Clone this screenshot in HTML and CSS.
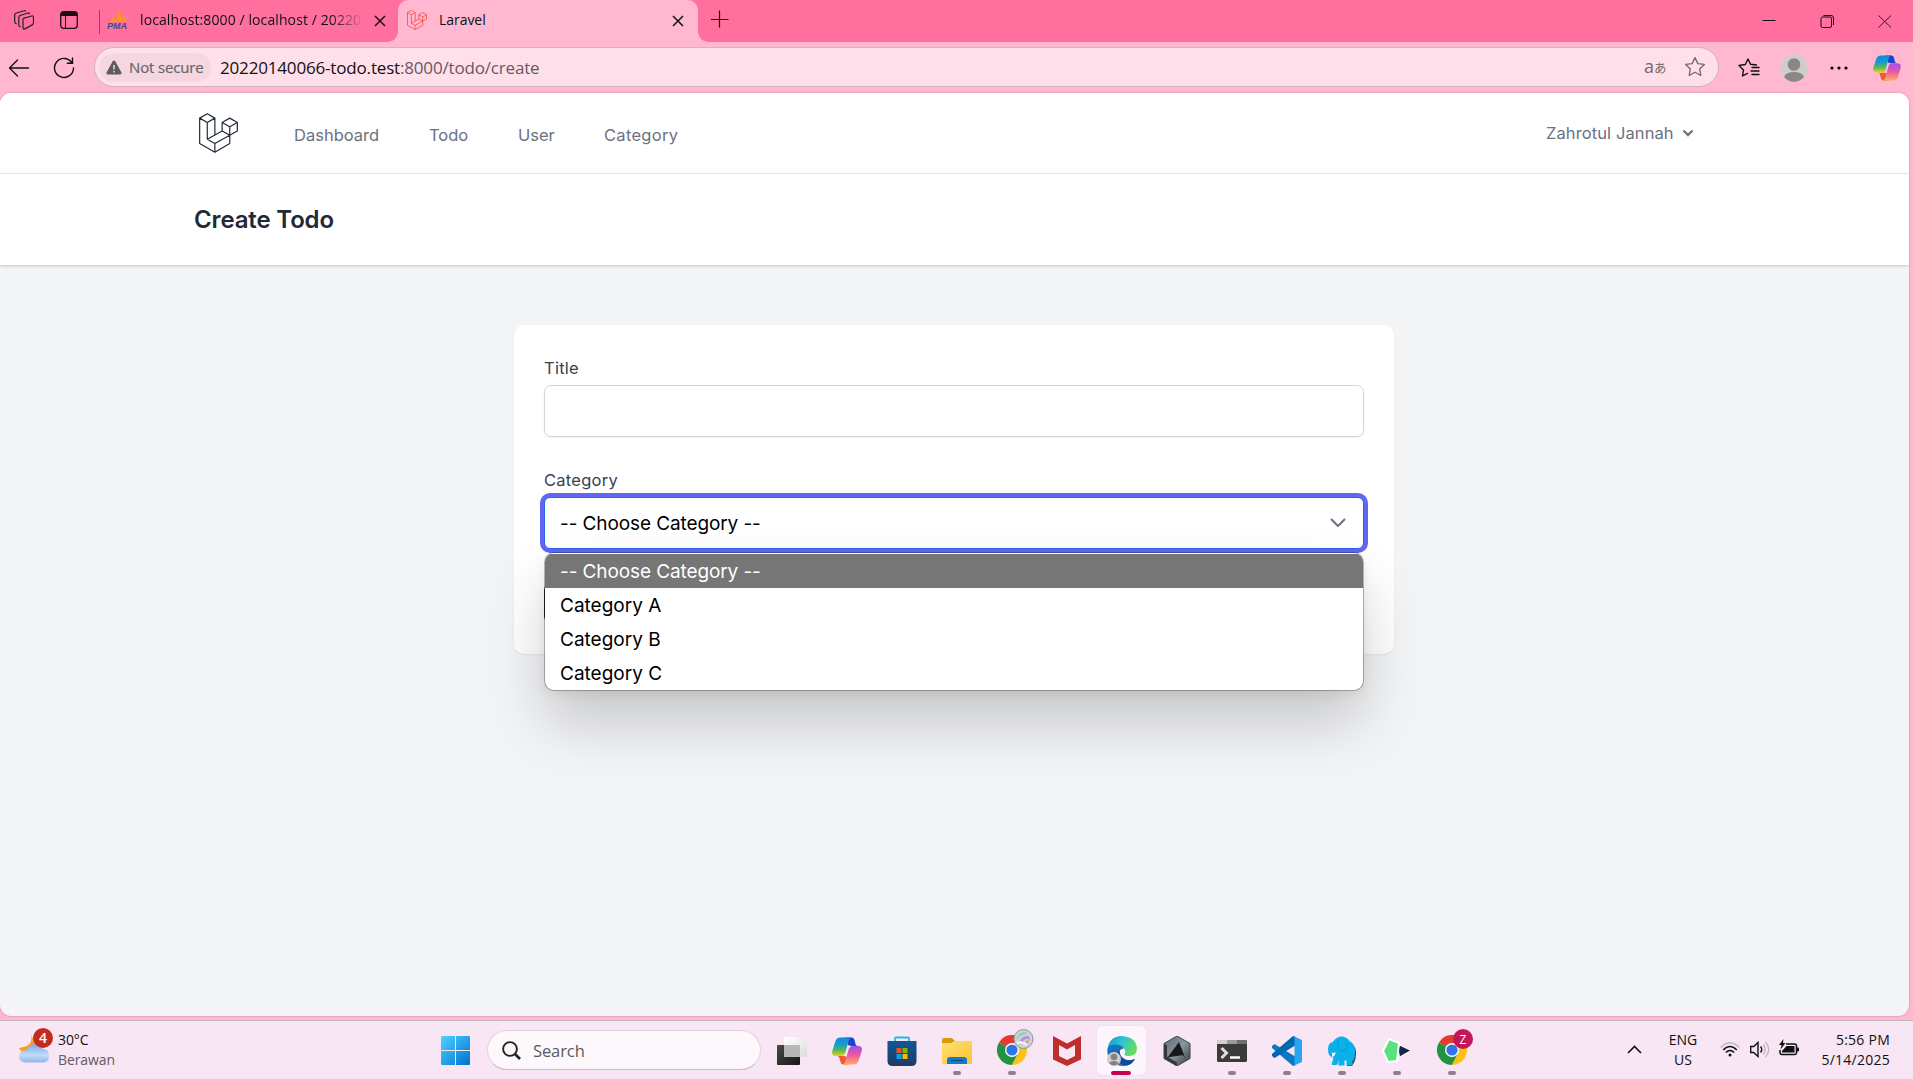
FILE: index.html
```html
<!DOCTYPE html>
<html lang="en">
<head>
<meta charset="utf-8">
<title>Laravel</title>
<link rel="stylesheet" href="styles.css">
</head>
<body>
<svg class="defs" aria-hidden="true">
  <defs>
    <linearGradient id="cpA" x1="0" y1="0" x2="0" y2="1"><stop offset="0" stop-color="#1685e0"/><stop offset=".4" stop-color="#159fc9"/><stop offset=".7" stop-color="#58b957"/><stop offset="1" stop-color="#f4cf1a"/></linearGradient>
    <linearGradient id="cpB" x1="0" y1="0" x2="0" y2="1"><stop offset="0" stop-color="#a04ff0"/><stop offset=".5" stop-color="#ec5a9b"/><stop offset="1" stop-color="#ffab68"/></linearGradient>
    <linearGradient id="win" x1="0" y1="0" x2="1" y2="1"><stop offset="0" stop-color="#4fd4ff"/><stop offset="1" stop-color="#006fd1"/></linearGradient>
    <linearGradient id="folder" x1="0" y1="0" x2="1" y2="1"><stop offset="0" stop-color="#ffe07c"/><stop offset="1" stop-color="#fdc22d"/></linearGradient>
    <linearGradient id="store" x1="0" y1="0" x2="0" y2="1"><stop offset="0" stop-color="#0f5799"/><stop offset="1" stop-color="#203a63"/></linearGradient>
    <linearGradient id="edgeTop" x1="0" y1="0" x2="1" y2=".4"><stop offset="0" stop-color="#1697dc"/><stop offset=".5" stop-color="#2cc0d4"/><stop offset="1" stop-color="#62de63"/></linearGradient>
    <linearGradient id="cloud" x1="0" y1="0" x2="0" y2="1"><stop offset="0" stop-color="#79a9ee"/><stop offset=".6" stop-color="#c6daf5"/><stop offset="1" stop-color="#8fb5ee"/></linearGradient>
    <linearGradient id="dark" x1="0" y1="0" x2="1" y2="1"><stop offset="0" stop-color="#4a4a48"/><stop offset="1" stop-color="#151515"/></linearGradient>
    <linearGradient id="pale" x1="0" y1="0" x2="1" y2="1"><stop offset="0" stop-color="#fff"/><stop offset="1" stop-color="#dcdcdc"/></linearGradient>
    <linearGradient id="hex" x1="0" y1="0" x2="1" y2="1"><stop offset="0" stop-color="#5c6670"/><stop offset=".5" stop-color="#8a97a2"/><stop offset="1" stop-color="#33393f"/></linearGradient>
    <symbol id="laravel" viewBox="56 70 118 120">
      <path d="M58 85 81 72l23 13-23 13zM58 85v77l46 26 45-26v-25M81 98v51M104 85v52M81 149l23 13v26M104 162l45-25-23-13-45 25M126 98l23-13 23 13-23 13zM126 98v26M149 111v26l23-13V98" fill="none" stroke="currentColor" stroke-linejoin="round"/>
    </symbol>
    <symbol id="copilot" viewBox="0 0 30 28">
      <path d="M13 .5h7q1.800 0 2.500 2.500l1.200 4.500q.6 1.500 2.300 1.500h-7l-3-1z" fill="#1b45c9"/>
      <path d="M17 27.500h-6q-1.800 0-2.500-2.500l-1.200-4.500Q6.700 19 5 19h7l3 1z" fill="#ee5a36"/>
      <path d="M8.500.5H20q-2.500.3-3.500 4l-3.100 11q-1 3.500-4.200 3.500H4q-5 0-3.600-5.500L3.300 4.500Q4.500.5 8.500.5z" fill="url(#cpA)"/>
      <path d="M21.500 27.500H10q2.500-.3 3.500-4l3.100-11q1-3.500 4.200-3.500H26q5 0 3.600 5.500l-2.900 9q-1.200 4-5.200 4z" fill="url(#cpB)"/>
    </symbol>
    <symbol id="chrome" viewBox="0 0 30 30">
      <path d="M15 15 2 7.500A15 15 0 0 1 28 7.500z" fill="#e33b2e"/>
      <path d="M2 7.500A15 15 0 0 0 15 30l6.100-11.500L15 15z" fill="#229342"/>
      <path d="M15 8h13.300A15 15 0 0 1 15 30l6.100-11.500z" fill="#fbc116"/>
      <circle cx="15" cy="15" r="7" fill="#fff"/><circle cx="15" cy="15" r="5.600" fill="#2f73e6"/>
    </symbol>
    <symbol id="close" viewBox="0 0 12 12"><path d="m1 1 10 10M11 1 1 11" stroke="currentColor" fill="none"/></symbol>
    <symbol id="star" viewBox="0 0 20 20"><path d="m10 1.500 2.600 5.400 5.900.8-4.300 4.100 1.100 5.900L10 14.800l-5.300 2.900 1.100-5.900L1.500 7.700l5.900-.8z" fill="none" stroke="currentColor" stroke-width="1.200" stroke-linejoin="round"/></symbol>
  </defs>
</svg>

<div class="browser">
  <div class="titlebar">
    <div class="tab-tools">
      <svg class="workspaces" width="20" height="20" viewBox="0 0 20 20" fill="none" stroke="#222" stroke-width="1.200" stroke-linejoin="round"><path d="M9.500 8.300 17.500 6q2-.5 2 1.500v5.200q0 1.500-1.300 2.200l-7.400 4q-1.800.8-1.800-1.200v-8q0-1.100.5-1.400z"/><path d="M6.500 17 5.300 16.200Q4.800 16 4.800 15V7.500q0-1.500 1.200-2L14 3q1.300-.3 1.700 1M2.500 14l-1.200-.9q-.6-.4-.6-1.600V5q0-1.300 1.200-1.700L10 .8q1.200-.4 1.700.8"/></svg>
      <svg class="vertical-tabs" width="18" height="18" viewBox="0 0 18 18"><rect x=".7" y=".7" width="16.600" height="16.600" rx="3" fill="none" stroke="#181015" stroke-width="1.300"/><path d="M1 5V3q0-2 2-2h12q2 0 2 2v2z" fill="#181015"/><path d="M5.500 5v12" stroke="#181015"/></svg>
    </div>
    <div class="tab tab-idle">
      <svg class="pma" width="20" height="20" viewBox="0 0 20 20"><path d="M1 12.500Q6 9 7 2.500l.5 9zM8 11.500Q12 7 11 0q4.500 5 4.500 11zM16 11.500V4q3 3.500 3.500 7.500z" fill="#f89c0e"/><text x="0" y="19" textLength="20" lengthAdjust="spacingAndGlyphs" class="pma-text">PMA</text></svg>
      <span class="tab-title fade">localhost:8000 / localhost / 20220</span>
      <svg class="tab-x" width="12" height="12"><use href="#close"/></svg>
    </div>
    <div class="tab tab-active">
      <svg class="laravel-fav" width="20" height="20"><use href="#laravel"/></svg>
      <span class="tab-title">Laravel</span>
      <svg class="tab-x" width="12" height="12"><use href="#close"/></svg>
    </div>
    <svg class="new-tab" width="18" height="18" viewBox="0 0 18 18"><path d="M8.500.5v17M0 9.500h17.500" stroke="#111" stroke-width="1.200"/></svg>
    <div class="window-buttons">
      <svg width="14" height="14" viewBox="0 0 14 14"><path d="M.5 6.500h13" stroke="#111"/></svg>
      <svg width="14" height="14" viewBox="0 0 14 14"><rect x="1" y="3" width="10.500" height="10.500" rx="1.500" fill="none" stroke="#111"/><path d="M3.500 1.500h7.500q2.500 0 2.500 2.300V11" fill="none" stroke="#111"/></svg>
      <svg width="14" height="14" viewBox="0 0 14 14"><path d="m.5 1.500 12.500 12m0-12-12.500 12" stroke="#222"/></svg>
    </div>
  </div>

  <div class="toolbar">
    <svg class="back" width="22" height="18" viewBox="0 0 22 18" fill="none" stroke="#111" stroke-width="1.300" stroke-linecap="round" stroke-linejoin="round"><path d="M20.500 9H1.500M9.500 1l-8 8 8 8"/></svg>
    <svg class="reload" width="22" height="22" viewBox="0 0 22 22" fill="none" stroke="#111" stroke-width="1.400" stroke-linecap="round"><path d="M18.800 5.500A9.500 9.500 0 1 0 20.500 11M19.500 1v5.200h-5.200"/></svg>
    <div class="address">
      <span class="security"><svg width="16" height="15" viewBox="0 0 16 15"><path d="M8 .5q.8 0 1.300.8l6 11q.8 2-1.200 2.200H2Q0 14.300.7 12.300l6-11Q7.200.5 8 .5z" fill="#5f5b5e"/><path d="M8 5v4.500M8 11v1.600" stroke="#f7dce6" stroke-width="1.400"/></svg><span class="security-text">Not secure</span></span>
      <span class="url"><b>20220140066-todo.test</b>:8000/todo/create</span>
      <span class="translate"><span class="latin">a</span><span class="kana">あ</span></span>
      <svg class="fav-star" width="22" height="22"><use href="#star"/></svg>
    </div>
    <svg class="favorites" width="22" height="20" viewBox="0 0 22 20" fill="none" stroke="#111" stroke-width="1.400" stroke-linecap="round" stroke-linejoin="round"><path d="M18.500 7 12.500 6.300 10 1 7.300 6.500 1 7.500l4.500 4.400L4.500 18l5-2.600M14 9.500h7M13 13h8M14 16.500h7"/></svg>
    <svg class="avatar" width="28" height="28" viewBox="0 0 28 28"><circle cx="14" cy="14" r="13.700" fill="#d0cecc"/><circle cx="14" cy="10.500" r="6.300" fill="#8b8784"/><path d="M4 23q2-5 10-5t10 5q-4 4.700-10 4.700T4 23z" fill="#8b8784"/></svg>
    <svg class="more" width="18" height="4" viewBox="0 0 18 4"><circle cx="2" cy="2" r="1.600"/><circle cx="9" cy="2" r="1.600"/><circle cx="16" cy="2" r="1.600"/></svg>
    <svg class="copilot-tool" width="28" height="26"><use href="#copilot"/></svg>
  </div>

  <main class="page">
    <nav class="nav">
      <svg class="logo" width="39" height="40"><use href="#laravel"/></svg>
      <a class="link dashboard">Dashboard</a>
      <a class="link todo">Todo</a>
      <a class="link user">User</a>
      <a class="link category">Category</a>
      <div class="account"><span class="account-name">Zahrotul Jannah</span><svg width="12" height="8" viewBox="0 0 12 8"><path d="m1.500 1.500 4.500 4.500 4.500-4.500" fill="none" stroke="#6b7280" stroke-width="2.300"/></svg></div>
    </nav>
    <header class="heading"><h1>Create Todo</h1></header>
    <form class="card">
      <label>Title</label>
      <div class="input"></div>
      <label class="label-category">Category</label>
      <div class="select">
        <span class="choice">-- Choose Category --</span>
        <svg width="16" height="10" viewBox="0 0 16 10"><path d="m1.500 1.500 6.500 6.500 6.500-6.500" fill="none" stroke="#6b7280" stroke-width="2" stroke-linecap="round" stroke-linejoin="round"/></svg>
        <ul class="options">
          <li class="selected"><span class="choice">-- Choose Category --</span></li>
          <li>Category A</li>
          <li>Category B</li>
          <li>Category C</li>
        </ul>
      </div>
      <div class="save"></div>
    </form>
  </main>
</div>

<footer class="taskbar">
  <div class="weather">
    <svg width="36" height="38" viewBox="0 0 36 38"><path d="M13 8q3 11-12 13 3 6 9 4l12-8q-6-2-9-9z" fill="#f3a21e"/><path d="M8 35.500Q1 35 1 29q1-6 8-6 2-6 8-6t8 5q6 0 6 7t-7 6.500z" fill="url(#cloud)"/><circle cx="25" cy="11" r="10" fill="#c42b1c"/><text x="25" y="16" text-anchor="middle" class="badge-num">4</text></svg>
    <div class="weather-text"><span class="temp">30°C</span><span class="cond">Berawan</span></div>
  </div>
  <div class="apps">
    <svg class="start" width="29" height="29" viewBox="0 0 29 29"><path d="M1 0h13v14H0V1q0-1 1-1zM15 0h13q1 0 1 1v13H15zM0 15h14v14H1q-1 0-1-1zM15 15h14v13q0 1-1 1H15z" fill="url(#win)"/></svg>
    <div class="search"><svg width="19" height="19" viewBox="0 0 19 19" fill="none" stroke="#222"><circle cx="8" cy="8" r="6.900" stroke-width="1.900"/><path d="m13 13 5 5" stroke-width="2.600"/></svg><span>Search</span></div>
    <div class="app"><svg width="30" height="28" viewBox="0 0 30 28"><rect y="8" width="23" height="20" rx="1" fill="url(#dark)"/><rect x="7" y="0" width="23" height="20" rx="1" fill="url(#pale)"/><path d="M7 8h16v12H7z" fill="#b7b7b7"/></svg></div>
    <div class="app"><svg width="30" height="28"><use href="#copilot"/></svg></div>
    <div class="app store"><svg width="30" height="30" viewBox="0 0 30 30"><path d="M8 5V2.500Q8 1.500 9 1.500h12q1 0 1 1V5" fill="none" stroke="#28b4e8" stroke-width="1.800"/><path d="M.5 5h29v20q0 5-5 5h-19q-5 0-5-5z" fill="url(#store)"/><path d="M9.500 12h5v5h-5z" fill="#f25022"/><path d="M15.500 12h5v5h-5z" fill="#7fba00"/><path d="M9.500 18h5v5h-5z" fill="#00a4ef"/><path d="M15.500 18h5v5h-5z" fill="#ffb900"/></svg></div>
    <div class="app run"><svg width="30" height="28" viewBox="0 0 30 28"><path d="M0 3q0-2 2-2h8l3 3-3 4H0z" fill="#d99b07"/><path d="M0 6h9l4-2h16q1 0 1 1v22H0z" fill="url(#folder)"/><path d="M5 27v-4q0-3 3-3h14q3 0 3 3v4z" fill="#117bcb"/><path d="M9 23.500h12" stroke="#0a4a82"/></svg></div>
    <div class="app run badge"><svg width="37" height="37" viewBox="0 0 37 37"><use href="#chrome" x="0" y="6" width="30" height="30"/><circle cx="26.500" cy="10" r="9.500" fill="#cdd3d5" stroke="#8c9698"/><path d="M19.500 10q2-7 9-7l2 2q-7 0-11 6z" fill="#8bd1bf"/><path d="M22 13q3-7 10-6l1 4q-5-3-8 3z" fill="#b296d6"/><path d="M28 12l4-1-1 4z" fill="#e58aa8"/><path d="M20 14q5-2 10 2" stroke="#f7f9f8" stroke-width="2" fill="none"/></svg></div>
    <div class="app"><svg width="28" height="30" viewBox="0 0 28 30"><path d="M0 0 14 7.500 28 0v23.500L14 30 0 23.500zM6 9v11l8 4 8-4V9l-8 4.500z" fill="#bf2e2d" fill-rule="evenodd"/></svg></div>
    <div class="app run current"><svg width="30" height="30" viewBox="0 0 30 30"><path d="M.3 14Q2 0 15 0q14 1 15 12 0 8-8 8-5 0-4.500-2 2-3-1-6-6-4-16.200 2z" fill="url(#edgeTop)"/><path d="M.3 15Q1 8 8 8.500q8 .5 8.500 4-5 1-4.500 6 .5 6 8 6 4 0 8-1.500-4 7-12.500 7Q1 29 .3 15z" fill="#1571bd"/><path d="M12.500 14q-5 5-1 11 3.500 5 8.500 4.500 5-1 8-6.500-7 3-12-1-3.500-3-3.500-8z" fill="#0e4b98"/><circle cx="7" cy="23" r="7" fill="#cfcdcb"/><circle cx="7" cy="21" r="3.300" fill="#85817f"/><path d="M2 27q5-4 10 0-5 5-10 0z" fill="#85817f"/></svg></div>
    <div class="app"><svg width="28" height="30" viewBox="0 0 28 30"><path d="m14 0 13 7.500v15L14 30 1 22.500v-15z" fill="url(#hex)"/><path d="M16 6 4.500 21.500l9-1.500 7-1 1 3z" fill="#17191b"/><path d="m16 6 6 16-2-3z" fill="#101214"/><path d="m1 7.500 3 2v11l10 6V30L1 22.500z" fill="#31383e"/><path d="m14 0 13 7.500v15L14 30 1 22.500v-15z" fill="none" stroke="#3c4349"/></svg></div>
    <div class="app run"><svg width="30" height="22" viewBox="0 0 30 22"><rect width="30" height="22" rx="1.500" fill="#3b3b3b"/><path d="M1 0h9v4H0V1q0-1 1-1z" fill="#cfcfcf"/><path d="M10 0h10v4H10z" fill="#999"/><path d="M20 0h9q1 0 1 1v3H20z" fill="#6d6d6d"/><path d="m4.500 8 5 5-5 5" fill="none" stroke="#ddd" stroke-width="3"/><path d="M13 17.500h10" stroke="#fff" stroke-width="2.500"/></svg></div>
    <div class="app run"><svg width="30" height="30" viewBox="0 0 30 30"><path d="M2.500 8 0 10v2l21 18 3-1V21z" fill="#0879c5"/><path d="M2.500 22 0 20v-2L21 0l3 1v8z" fill="#0067b0"/><path d="M21 0 29 3.500q1 .5 1 1.500v20q0 1-1 1.500L21 30q1.500-1 1.500-3V3q0-2-1.500-3z" fill="#2aa5f2"/></svg></div>
    <div class="app run"><svg width="30" height="30" viewBox="0 0 30 30"><path d="M24 7q5.500 4 5 11 0 5-2 8.500L25 30h-5z" fill="#26404d"/><path d="M6 6Q9 .5 15 .5 20 1 22.500 5q5 2 5.700 10 0 6-1.700 10l-1-1v5.500h-6v-5h-2v5h-6v-6l-1 5q-3.500 1.500-6 0l2-6.500Q1 21 1 13q0-6 5-7z" fill="#0ab0ea"/><path d="M11 5q-1 10 5 10 6-1 4-8" stroke="#0799cc" fill="none"/><path d="M4 16q2 2 4.500 0 0 4-4 5.500Q6 18 4 16z" fill="#fff"/></svg></div>
    <div class="app run"><svg width="30" height="28" viewBox="0 0 30 28"><path d="m7 2 10 4-2 18-9 1L1 14z" fill="#5be081" stroke="#fff" stroke-width="2"/><path d="M17.500 8 29 13.500 17.500 20q-2-6 0-12z" fill="#18244d" stroke="#fff"/></svg></div>
    <div class="app run badge"><svg width="37" height="37" viewBox="0 0 37 37"><use href="#chrome" x="0" y="6" width="30" height="30"/><circle cx="26" cy="10" r="10" fill="#c2185b"/><text x="26" y="14.500" text-anchor="middle" class="badge-z">Z</text></svg></div>
  </div>
  <div class="tray">
    <svg class="caret" width="15" height="9" viewBox="0 0 15 9"><path d="m1 8 6.500-6.500L14 8" fill="none" stroke="#111" stroke-width="1.600"/></svg>
    <div class="lang"><span>ENG</span><span>US</span></div>
    <svg class="wifi" width="20" height="15" viewBox="0 0 20 15" fill="none" stroke="#111" stroke-width="1.500"><path d="M.7 5.500q9.300-9.500 18.600 0" stroke="#c3b6c1"/><path d="M3.200 8q6.800-7 13.600 0M5.800 10.500q4.200-4 8.400 0"/><circle cx="10" cy="13" r="1.500" fill="#111" stroke="none"/></svg>
    <svg class="volume" width="20" height="17" viewBox="0 0 20 17" fill="none" stroke="#111" stroke-width="1.400"><path d="M.7 5.500h3L8 1.500v14l-4.300-4h-3z"/><path d="M10.500 5.500q2.500 3 0 6"/><path d="M13 3.500q4.500 5 0 10M15.500 1q6.500 7.500 0 15" stroke="#bbaeba" stroke-width="1.200"/></svg>
    <svg class="battery" width="21" height="17" viewBox="0 0 21 17"><path d="M7 5h8.500q2 0 2 2v6.500q0 2-2 2H3q-2 0-2-2V11" fill="none" stroke="#111" stroke-width="1.500"/><path d="M7.500 7H15.500v6.500H3V12z" fill="#111"/><path d="M18 8.500h1q1 0 1 1v2q0 1-1 1h-1z" fill="#111"/><path d="M4.500 0 0 6h2.500L1.500 10.500 6.500 4H4z" fill="#111"/></svg>
    <div class="clock"><span class="time">5:56 PM</span><span class="date">5/14/2025</span></div>
  </div>
</footer>
</body>
</html>
```
FILE: styles.css
```css
* { box-sizing: border-box; }
html, body { margin: 0; height: 100%; }
body {
  display: flex; flex-direction: column; height: 1079px; overflow: hidden;
  font-family: "Open Sans", "Noto Sans", sans-serif; color: #111; background: #ffb8d0;
}
svg { display: block; flex: none; }
.defs { position: absolute; width: 0; height: 0; }
.browser { height: 1020px; display: flex; flex-direction: column; background: #ffb8d0; }

/* Tab strip */
.titlebar { height: 42px; display: flex; background: #ff709f; }
.tab-tools { width: 99px; height: 42px; display: flex; padding-left: 14px; gap: 26px; }
.workspaces { margin-top: 10px; }
.vertical-tabs { margin-top: 11px; }
.tab { height: 42px; display: flex; position: relative; white-space: nowrap; }
.tab-idle { width: 299px; padding-left: 8px; }
.tab-idle::before { content: ""; position: absolute; left: 0; top: 10px; width: 1px; height: 24px; background: #9d3f60; }
.pma { margin-top: 10px; }
.pma-text { font: italic bold 8.500px "Liberation Sans", sans-serif; fill: #3c4a86; }
.tab-title { margin: 10px 0 0 13px; font-size: 14px; line-height: 20px; letter-spacing: -.25px; }
.fade { width: 222px; overflow: hidden; letter-spacing: .1px; -webkit-mask-image: linear-gradient(90deg, #000 190px, transparent 224px); mask-image: linear-gradient(90deg, #000 190px, transparent 224px); }
.tab-x { margin: 15px 12px 0 auto; stroke-width: 1.5; }
.tab-active { width: 300px; background: #ffb8d0; border-radius: 10px 10px 0 0; padding-left: 8px; }
.tab-active::before, .tab-active::after { content: ""; position: absolute; bottom: 0; width: 10px; height: 10px; }
.tab-active::before { left: -10px; background: radial-gradient(circle at 0 0, transparent 9.5px, #ffb8d0 10px); }
.tab-active::after { right: -10px; background: radial-gradient(circle at 100% 0, transparent 9.5px, #ffb8d0 10px); }
.laravel-fav { margin: 10px 0 0 1px; color: #ff4b45; stroke-width: 5; }
.tab-active .tab-title { margin-left: 12px; letter-spacing: -.05px; }
.tab-active .tab-x { margin-right: 14px; }
.new-tab { margin: 10px 0 0 13px; }
.window-buttons { margin: 14px 21px 0 auto; display: flex; gap: 44px; }

/* Toolbar */
.toolbar { height: 51px; display: flex; align-items: center; }
.back { margin-left: 8px; }
.reload { margin-left: 23px; }
.address { width: 1625px; height: 40px; margin: 0 0 1px 19px; border: 1px solid #cfb3c0; border-radius: 20px; background: #ffe0ea; display: flex; align-items: center; padding-left: 4px; }
.security { width: 112px; height: 29px; border-radius: 15px; background: #f5d7e2; display: flex; align-items: center; padding-left: 7px; color: #6a6367; }
.security-text { margin-left: 7px; font-size: 15px; letter-spacing: -.15px; white-space: nowrap; -webkit-text-stroke: .2px; }
.url { margin-left: 9px; font-size: 17px; letter-spacing: -.17px; color: #66595f; white-space: nowrap; }
.url b { font-weight: 400; color: #111; }
.translate { margin-left: auto; width: 22px; color: #746970; display: flex; align-items: baseline; }
.latin { font-size: 18px; line-height: 20px; }
.kana { font: 12.500px/20px "Noto Sans CJK JP", sans-serif; }
.fav-star { color: #746970; margin: 0 12px 0 18px; }
.favorites { margin-left: 19px; }
.avatar { margin-left: 20px; }
.more { margin-left: 22px; }
.copilot-tool { margin-left: 25px; }

/* Web page */
.page {
  width: 1909px; height: 923px; border-radius: 11px; background: #f3f4f6; overflow: hidden;
  font-family: Inter, "Open Sans", sans-serif; box-shadow: 0 0 2px #b87f95;
}
.nav { height: 81px; background: #fff; border-bottom: 1px solid #ededf0; display: flex; padding-left: 199px; }
.logo { margin-top: 20px; color: #1f2937; stroke-width: 3.6; }
.link { margin-top: 29px; font-size: 16.500px; line-height: 26px; color: #6b7280; white-space: nowrap; }
.dashboard { width: 85px; margin-left: 56px; }
.todo { width: 40px; margin-left: 50px; }
.user { width: 37px; margin-left: 49px; }
.category { margin-left: 49px; letter-spacing: .3px; }
.account { margin: 27px 215px 0 auto; display: flex; align-items: center; height: 26px; font-size: 16.500px; color: #6b7280; gap: 8px; }
.account-name { white-space: nowrap; width: 128px; letter-spacing: .1px; }
.heading { height: 91px; background: #fff; box-shadow: 0 1px 3px #0003; display: flex; align-items: center; padding-left: 194px; position: relative; }
.heading h1 { margin: 0; font-size: 24px; font-weight: 600; letter-spacing: -.15px; color: #1f2937; line-height: 32px; }
.card { width: 880px; height: 329px; margin: 60px 0 0 514px; padding: 30px; border-radius: 10px; background: #fff; box-shadow: 0 1px 2px #0001; }
.card label { display: block; height: 25px; line-height: 27px; font-size: 16.500px; letter-spacing: .25px; color: #374151; }
.input { height: 52px; margin-top: 5px; border: 1px solid #d1d5db; border-radius: 7px; box-shadow: 0 1px 2px #0001; }
.card .label-category { margin-top: 30px; }
.select { position: relative; height: 52px; margin-top: 5px; border: 1px solid #2563eb; border-radius: 6px; box-shadow: 0 0 0 4px #6366f1; background: #fff; display: flex; align-items: center; justify-content: space-between; padding: 0 17px 0 15px; font-size: 19px; color: #000; }
.choice { white-space: nowrap; letter-spacing: -.1px; }
.options { position: absolute; left: 0; right: 0; top: 55px; height: 137px; margin: 0; padding: 1px 0 0; list-style: none; background: #fff; border-radius: 9px; box-shadow: 0 0 0 1px #0004, 0 4px 12px #0000000f, 0 32px 58px #00000030; overflow: hidden; }
.options li { height: 34px; line-height: 35px; padding-left: 15px; white-space: nowrap; }
.options .selected { background: #767676; color: #fff; }
.save { width: 90px; height: 40px; margin-top: 34px; background: #1f2937; border-radius: 7px; }

/* Taskbar */
.taskbar { height: 59px; background: #f8e6f4; border-top: 1px solid #c4b4c0; display: flex; }
.weather { width: 440px; display: flex; padding: 6px 0 0 18px; }
.weather-text { display: flex; flex-direction: column; margin: 3px 0 0 4px; font-size: 14px; line-height: 20px; }
.temp { letter-spacing: -.1px; }
.cond { color: #625b61; letter-spacing: -.1px; }
.badge-num { font: 600 14px "Open Sans", sans-serif; fill: #fff; }
.badge-z { font: 12px "Open Sans", sans-serif; fill: #fff; }
.apps { display: flex; align-items: flex-start; }
.start { margin: 15px 0 0 1px; }
.search { width: 274px; height: 40px; margin: 9px 0 0 17px; border: 1px solid #e2d2df; border-bottom-color: #c9bac6; border-radius: 20px; background: #fdf8fc; display: flex; align-items: center; gap: 12px; padding-left: 14px; font-size: 16.500px; letter-spacing: -.1px; color: #5d575c; }
.app { width: 49px; height: 49px; margin: 5px 3px 0; display: flex; align-items: center; justify-content: center; position: relative; border-radius: 5px; }
.search + .app { margin-left: 6px; }
.badge svg { margin: -6px 0 0 7px; }
.run::after { content: ""; position: absolute; bottom: 0; left: 21px; width: 8px; height: 4px; border-radius: 2px; background: #8b8189; }
.current { background: #fcf5fb; box-shadow: 0 0 1px #cbbdc8; }
.current::after { left: 14px; width: 20px; background: #c40052; }
.tray { margin-left: auto; padding-right: 23px; display: flex; font-size: 14px; line-height: 20px; }
.caret { margin-top: 24px; }
.lang { width: 40px; margin: 9px 0 0 21px; display: flex; flex-direction: column; align-items: center; }
.wifi { margin: 21px 0 0 17px; }
.volume { margin: 20px 0 0 10px; }
.battery { margin: 18px 0 0 9px; }
.clock { width: 84px; margin: 9px 0 0 6px; display: flex; flex-direction: column; align-items: flex-end; letter-spacing: .25px; }
.time, .date { white-space: nowrap; }
```
